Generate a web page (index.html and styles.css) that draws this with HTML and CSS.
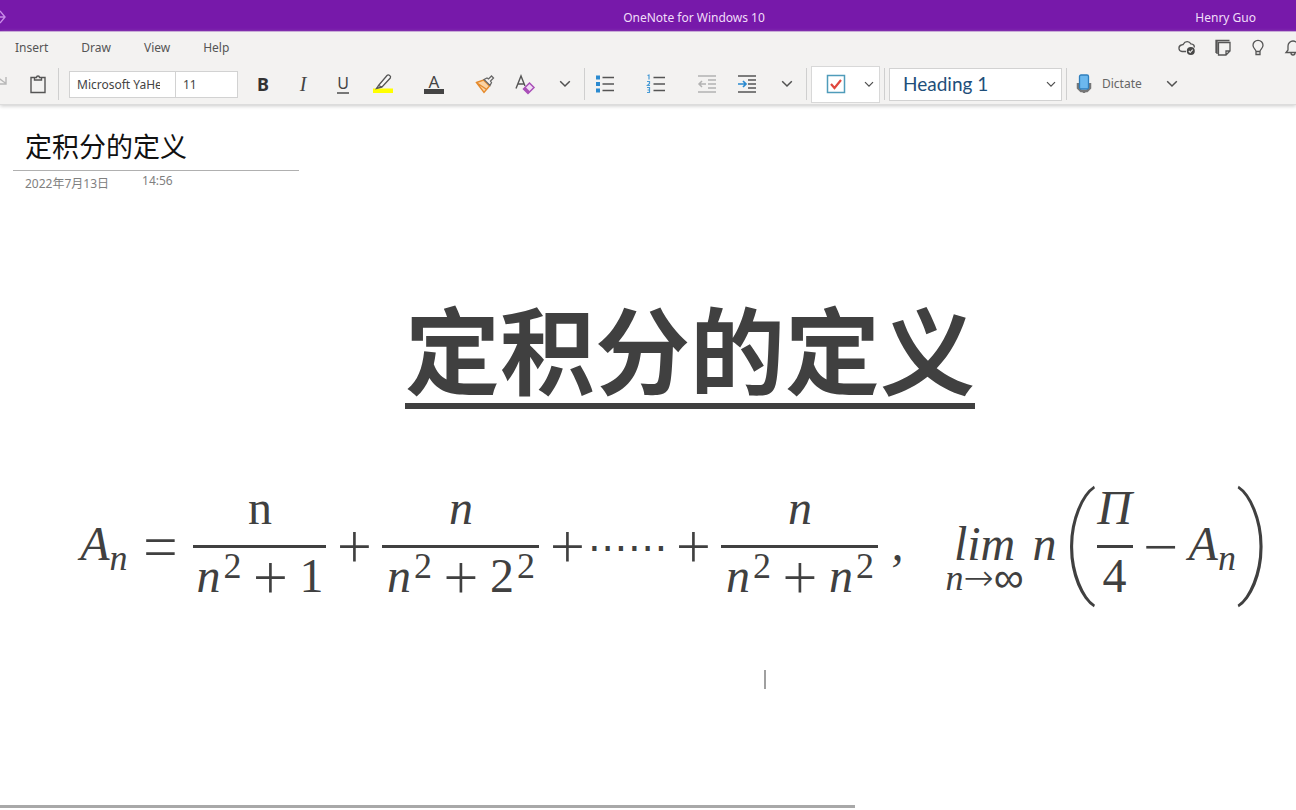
FILE: index.html
```html
<!DOCTYPE html>
<html lang="en">
<head>
<meta charset="utf-8">
<title>OneNote for Windows 10</title>
<link rel="stylesheet" href="styles.css">
</head>
<body>
<svg class="defs" aria-hidden="true">
  <symbol id="chevron" viewBox="0 0 12 8"><path d="M1.2 1.2 6 6l4.800-4.800" fill="none" stroke="#505050" stroke-width="1.500"/></symbol>
</svg>
<div class="app">
  <header class="titlebar">
    <button class="fullscreen" aria-label="Expand"><svg width="16" height="16" viewBox="0 0 16 16"><path d="M4 7h9M8 1l5 6-5 6" fill="none" stroke="#c98be8" stroke-width="1.400"/></svg></button>
    <span class="app-name">OneNote for Windows 10</span>
    <span class="account">Henry Guo</span>
  </header>

  <div class="ribbon">
    <nav class="tabs">
      <button class="tab">Insert</button>
      <button class="tab">Draw</button>
      <button class="tab">View</button>
      <button class="tab">Help</button>
      <div class="status">
        <button class="status-btn" aria-label="Sync status"><svg width="20" height="18" viewBox="0 0 20 18"><path d="M9 12.500H5A3.300 3.300 0 0 1 4.500 6 C6 5.800 6.300 5.800 6.500 5A4 4 0 0 1 13.800 4.800 C16.500 5 17.500 6.500 17.300 8.500" fill="none" stroke="#555" stroke-width="1.300"/><circle cx="13.800" cy="12" r="4" fill="#484848"/><path d="m11.800 12 1.400 1.500 2.500-2.800" fill="none" stroke="#f3f2f1" stroke-width="1.100"/></svg></button>
        <button class="status-btn" aria-label="Feed"><svg width="18" height="18" viewBox="0 0 18 18"><path d="M4.500 3.500h11.500v8.500l-4 4H4.500zM16 12h-4v4M2 14V1.500h13.500M3 2v13" fill="none" stroke="#555" stroke-width="1.300"/></svg></button>
        <button class="status-btn" aria-label="Tell me"><svg width="18" height="18" viewBox="0 0 18 18"><path d="M7 12.500C7 10.500 4 9.500 4 6.300a5 5 0 0 1 10 0C14 9.500 11 10.500 11 12.500zM7 12.500V15.500h4V12.500" fill="none" stroke="#555" stroke-width="1.300"/></svg></button>
        <button class="status-btn" aria-label="Notifications"><svg width="18" height="18" viewBox="0 0 18 18"><path d="M2 13.500h14L14 11V7A5 5 0 0 0 4 7v4zM7 14a2 2 0 0 0 4 0" fill="none" stroke="#555" stroke-width="1.300"/></svg></button>
      </div>
    </nav>

    <div class="tools">
      <button class="tool redo" aria-label="Redo"><svg width="16" height="20" viewBox="0 0 16 20"><path d="M5 3l9 6.500M14 3v7H7" fill="none" stroke="#b8b8b8" stroke-width="1.400"/></svg></button>
      <button class="tool paste" aria-label="Paste"><svg width="18" height="20" viewBox="0 0 18 20"><path d="M5 3.500H2v15h14v-15h-3M5.500 6h7V3.500h-2a1.500 1.500 0 0 0-3 0h-2z" fill="none" stroke="#555" stroke-width="1.400"/></svg></button>
      <span class="rule"></span>
      <div class="font-box">
        <input class="font-name" type="text" aria-label="Font" value="Microsoft YaHei">
        <input class="font-size" type="text" aria-label="Font size" value="11">
      </div>
      <button class="tool" aria-label="Bold"><b class="bold">B</b></button>
      <button class="tool" aria-label="Italic"><i class="italic">I</i></button>
      <button class="tool" aria-label="Underline"><span class="underline">U</span></button>
      <button class="tool" aria-label="Highlight"><svg width="22" height="22" viewBox="0 0 22 22"><path d="M1 15.500h20v4.500H1z" fill="#ff0"/><path d="M6.500 12.500 15 2.500c1.500-1.500 4.500.5 3.300 2.500L10 14zM6.500 12.500 4.500 15.500 10 14" fill="#f8f8f8" stroke="#555" stroke-width="1.300"/></svg></button>
      <button class="tool apart" aria-label="Font color"><span class="font-color">A</span></button>
      <button class="tool apart" aria-label="Format painter"><svg width="22" height="22" viewBox="0 0 22 22"><path d="M3 9.500 12 16.500 9.500 19z" fill="#f5a64a"/><path d="m2.500 9.500 7-2.500 6 6-5.500 6.500zM3 10l9 6" fill="#fbd3a3" stroke="#e58a2c" stroke-width="1.400"/><path d="m10 6.500 3-1.500 1.500 1L17.500 3 19.500 5 16.500 8 17.500 9.500 16 12.500z" fill="#f3f2f1" stroke="#666" stroke-width="1.300"/></svg></button>
      <button class="tool" aria-label="Clear formatting"><svg width="22" height="22" viewBox="0 0 22 22"><path d="M2 15.500 7 3l4 10M4 11h6" fill="none" stroke="#555" stroke-width="1.400"/><path d="m9.500 16 6-6 4.500 4.500-6 6z" fill="#f0dcf4" stroke="#a94fb8" stroke-width="1.500"/><path d="m9.500 16 2-2 4.500 4.500-2 2z" fill="#a94fb8"/></svg></button>
      <button class="tool" aria-label="More font options"><svg class="chev"><use href="#chevron"/></svg></button>
      <span class="rule tight"></span>
      <button class="tool" aria-label="Bullets"><svg width="22" height="20" viewBox="0 0 22 20"><path d="M2 1.500h4v4H2zM2 8h4v4H2zM2 14.500h4v4H2z" fill="#2b8ad0"/><path d="M8.500 3.500H20M8.500 10H20M8.500 16.500H20" stroke="#555" stroke-width="1.400"/></svg></button>
      <button class="tool apart" aria-label="Numbering"><svg width="22" height="20" viewBox="0 0 22 20"><path d="M2.500 1.500 4 1v4.500M2 7.500h2.500v2L2.500 11.500H5M2 13.500h2.500v5H2M2.500 16h2" fill="none" stroke="#4a9cd6" stroke-width="1.200"/><path d="M8.500 3.500H20M8.500 10H20M8.500 16.500H20" stroke="#555" stroke-width="1.400"/></svg></button>
      <button class="tool apart" aria-label="Decrease indent"><svg width="20" height="20" viewBox="0 0 20 20"><path d="M1 2h18M11 6h8M11 10h8M11 14h8M1 18h18M2 10h7M5 7l-3 3 3 3" fill="none" stroke="#b2b2b2" stroke-width="1.500"/></svg></button>
      <button class="tool" aria-label="Increase indent"><svg width="20" height="20" viewBox="0 0 20 20"><path d="M1 2h18M11 6h8M11 10h8M11 14h8M1 18h18" fill="none" stroke="#555" stroke-width="1.500"/><path d="M1 10h8M6 7l3 3-3 3" fill="none" stroke="#2b8ad0" stroke-width="1.700"/></svg></button>
      <button class="tool" aria-label="More paragraph options"><svg class="chev"><use href="#chevron"/></svg></button>
      <span class="rule tight"></span>
      <div class="todo">
        <button class="todo-main" aria-label="To do tag"><svg width="20" height="20" viewBox="0 0 20 20"><path d="M1.500 1.500h17v17h-17z" fill="#fff" stroke="#4f9cba" stroke-width="1.500"/><path d="m5 10 3.500 4L15 6" fill="none" stroke="#e0483e" stroke-width="2.200"/></svg></button>
        <button class="todo-more" aria-label="More tags"><svg class="chev small"><use href="#chevron"/></svg></button>
      </div>
      <span class="rule"></span>
      <div class="style-box">
        <select class="style" aria-label="Style"><option>Heading 1</option></select>
        <svg class="chev small style-chev"><use href="#chevron"/></svg>
      </div>
      <span class="rule"></span>
      <button class="dictate"><svg width="18" height="20" viewBox="0 0 18 20"><path d="M3 9v5l3 3h6l3-3V9M9 16v3" fill="none" stroke="#777" stroke-width="2.500"/><rect x="4.500" y="1" width="9" height="14" rx="1.500" fill="#6cb8ee" stroke="#2f7fbd" stroke-width="1.300"/></svg>Dictate</button>
      <button class="tool" aria-label="Dictation options"><svg class="chev"><use href="#chevron"/></svg></button>
    </div>
  </div>

  <main class="page">
    <header class="note-head">
      <h1 class="note-title">定积分的定义</h1>
      <div class="stamp"><span class="date">2022年7月13日</span><span class="time">14:56</span></div>
    </header>

    <h2 class="topic"><span class="topic-text">定积分的定义</span></h2>

    <div class="formula">
      <span class="term"><i>A</i><i class="sub">n</i></span>
      <span class="op equals">=</span>
      <span class="frac short"><span class="num">n</span><span class="den"><span><i>n</i><span class="sup">2</span></span><span class="op">+</span><span>1</span></span></span>
      <span class="op">+</span>
      <span class="frac"><span class="num"><i>n</i></span><span class="den"><span><i>n</i><span class="sup">2</span></span><span class="op">+</span><span>2<span class="sup">2</span></span></span></span>
      <span class="op">+</span>
      <span class="dots">⋯⋯</span>
      <span class="op">+</span>
      <span class="frac"><span class="num"><i>n</i></span><span class="den"><span><i>n</i><span class="sup">2</span></span><span class="op">+</span><span><i>n</i><span class="sup">2</span></span></span></span>
      <span class="term comma"><i>,</i></span>
      <span class="limit"><i>lim</i><span class="under"><i>n</i><span class="arrow">→</span><span class="infinity">∞</span></span></span>
      <span class="term factor"><i>n</i></span>
      <span class="group">
        <span class="paren">(</span>
        <span class="frac tiny"><span class="num"><i>Π</i></span><span class="den">4</span></span>
        <span class="op">−</span>
        <span class="term"><i>A</i><i class="sub">n</i></span>
        <span class="paren">)</span>
      </span>
    </div>

    <div class="caret"></div>
    <div class="page-edge"></div>
  </main>
</div>
</body>
</html>
```
FILE: styles.css
```css
* { box-sizing: border-box; }
body { margin: 0; background: #fff; color: #444; font: 12px/16px "Noto Sans", "Noto Sans CJK SC", sans-serif; }
button { border: 0; padding: 0; margin: 0; background: none; color: inherit; font: inherit; }
svg { display: block; flex: none; }
.defs { position: absolute; width: 0; height: 0; }
.app { min-height: 100vh; display: flex; flex-direction: column; overflow: hidden; }

.titlebar { display: grid; grid-template-columns: 1fr auto 1fr; align-items: center; height: 32px; padding: 4px 40px 0 0; margin-left: -8px; background: #7719aa; border-bottom: 1px solid #c9a3dd; color: #f1def9; }
.app-name { padding-left: 140px; }
.account { justify-self: end; }

.ribbon { background: #f3f2f1; border-bottom: 1px solid #dcdcdc; box-shadow: 0 1px 4px #c8c8c8; position: relative; }
.tabs { display: flex; align-items: center; height: 32px; padding-left: 15px; gap: 33px; color: #555; }
.status { display: flex; gap: 17px; margin-left: auto; margin-right: -6px; }
.tools { display: flex; align-items: center; height: 40px; }
.tool { display: flex; align-items: center; justify-content: center; width: 40px; height: 32px; flex: none; }
.redo { width: 16px; margin-left: -8px; }
.paste { width: 60px; }
.rule { width: 1px; height: 32px; background: #cfcfcf; margin: 0 4px; flex: none; }
.tight { margin: 0 0 0 -1px; }
.paste + .rule { margin: 0 10px 0 -10px; }
.apart { margin-left: 11px; }
.chev { width: 12px; height: 8px; }
.small { width: 10px; height: 7px; }

.font-box { display: flex; height: 27px; border: 1px solid #d2d2d2; background: #fff; margin-right: 5px; flex: none; }
.font-name, .font-size { border: 0; margin: 0; background: none; color: #444; font: inherit; padding: 2px 15px 0 7px; width: 105px; min-width: 0; }
.font-size { width: 62px; border-left: 1px solid #d2d2d2; }
.bold { font-size: 18px; color: #333; }
.italic { font: italic 20px "Liberation Serif", serif; }
.underline { font-size: 16px; line-height: 17px; border-bottom: 2px solid #777; }
.font-color { width: 20px; font-size: 17px; line-height: 15px; border-bottom: 5px solid #444; }

.todo { display: flex; height: 37px; width: 69px; margin-left: 4px; background: #fff; border: 1px solid #d8d8d8; flex: none; }
.todo-main, .todo-more { display: flex; align-items: center; justify-content: center; width: 48px; }
.todo-more { width: 20px; }
.style-box { display: flex; align-items: center; width: 173px; height: 33px; background: #fff; border: 1px solid #d2d2d2; flex: none; }
.style { appearance: none; border: 0; background: none; color: #1e4e79; font: 19px/24px Lato, sans-serif; padding: 0 0 0 13px; flex: 1; }
.style-chev { margin-right: 5px; }
.dictate { display: flex; align-items: center; gap: 9px; margin-left: 4px; margin-right: 10px; color: #666; }

.page { flex: 1; display: flex; flex-direction: column; }
.note-head { width: 286px; margin: 21px 0 0 13px; }
.note-title { margin: 0; padding: 0 0 4px 12px; border-bottom: 1px solid #b0b0b0; color: #111; font: 27px/40px "Noto Sans CJK SC", sans-serif; }
.stamp { display: flex; align-items: flex-start; gap: 33px; padding: 1px 12px; color: #808080; font-size: 12px; line-height: 18px; }
.date { padding-top: 3px; }

.topic { margin: 97px 0 0; padding-left: 84px; text-align: center; color: #404040; font: 700 95px/112px "Noto Sans CJK SC", sans-serif; }
.topic-text { display: inline-block; border-bottom: 6px solid #404040; }

.formula { display: flex; align-items: center; justify-content: center; gap: 13px; margin-top: 75px; padding-left: 56px; white-space: nowrap; color: #404040; font: 48px/48px "Liberation Serif", serif; }
.term { padding-bottom: 6px; }
.sub, .sup { font-size: 36px; line-height: 0; position: relative; top: 10px; }
.sup { top: -14px; margin-left: 3px; }
.op { display: flex; justify-content: center; width: 30px; font-family: "Open Sans", sans-serif; font-weight: 300; font-size: 62px; flex: none; padding-bottom: 4px; }
.equals { margin: 0 5px; }
.frac { display: flex; flex-direction: column; width: 157px; flex: none; }
.short { width: 133px; }
.tiny { width: 36px; }
.num { text-align: center; padding-bottom: 13px; border-bottom: 3px solid #404040; }
.den { display: flex; justify-content: center; gap: 14px; height: 61px; padding-top: 4px; }
.dots { font-family: "DejaVu Sans", sans-serif; font-size: 40px; margin: 0 -2px 0 -8px; }
.comma { margin-right: 29px; }
.limit { display: flex; flex-direction: column; align-items: center; padding-top: 14px; }
.under { display: flex; align-items: center; font-size: 36px; line-height: 20px; }
.arrow, .infinity { font-family: "DejaVu Sans", sans-serif; font-weight: 200; font-size: 36px; }
.infinity { font-size: 42px; }
.factor { margin-left: -4px; }
.group { display: flex; align-items: center; gap: 13px; margin-left: -8px; }
.paren { font-family: Roboto, sans-serif; font-weight: 100; font-size: 118px; line-height: 108px; padding-bottom: 14px; }
.group .frac { margin-left: -13px; }
.group .paren:last-child { margin-left: -13px; }

.caret { width: 2px; height: 19px; margin: 61px 0 0 764px; background: #a0a0a0; }
.page-edge { width: 66%; height: 3px; margin: auto 0 2px; background: #a8a8a8; }
```
